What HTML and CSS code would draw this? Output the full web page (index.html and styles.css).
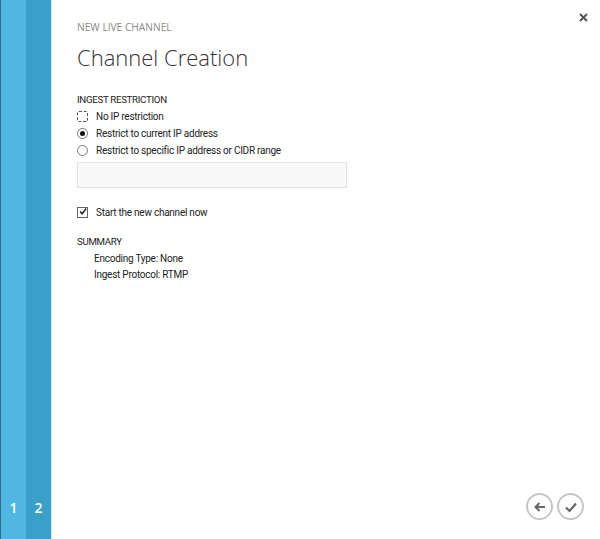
FILE: index.html
```html
<!DOCTYPE html>
<html>
<head>
<meta charset="utf-8">
<link rel="stylesheet" href="styles.css">
</head>
<body>
<div class="app">
  <nav class="steps">
    <div class="step step-one"><span>1</span></div>
    <div class="step step-two"><span>2</span></div>
  </nav>
  <main class="wizard">
    <header class="wizard-head">
      <div class="eyebrow">NEW LIVE CHANNEL</div>
      <button class="close" aria-label="Close">
        <svg width="9" height="9" viewBox="0 0 9 9"><path d="M1 1L8 8M8 1L1 8" stroke="#555" stroke-width="2"/></svg>
      </button>
    </header>
    <h1 class="title">Channel Creation</h1>

    <section class="group">
      <div class="label">INGEST RESTRICTION</div>
      <label class="option">
        <span class="radio focused"></span>
        <span>No IP restriction</span>
      </label>
      <label class="option">
        <span class="radio checked"></span>
        <span>Restrict to current IP address</span>
      </label>
      <label class="option">
        <span class="radio"></span>
        <span>Restrict to specific IP address or CIDR range</span>
      </label>
      <div class="textbox"></div>
    </section>

    <label class="option check-row">
      <span class="checkbox">
        <svg width="11" height="11" viewBox="0 0 11 11"><path d="M1.5 5.5L4.3 8.6L9.8 1.4" fill="none" stroke="#222" stroke-width="2"/></svg>
      </span>
      <span>Start the new channel now</span>
    </label>

    <section class="summary">
      <div class="label">SUMMARY</div>
      <div class="summary-item">Encoding Type: None</div>
      <div class="summary-item">Ingest Protocol: RTMP</div>
    </section>

    <footer class="wizard-foot">
      <button class="nav-btn" aria-label="Back">
        <svg width="14" height="14" viewBox="0 0 14 14"><path d="M12 7H3M6.5 3L2.5 7L6.5 11" fill="none" stroke="#666" stroke-width="2"/></svg>
      </button>
      <button class="nav-btn" aria-label="Finish">
        <svg width="14" height="14" viewBox="0 0 14 14"><path d="M2 7.5L5.5 11L12 3.5" fill="none" stroke="#666" stroke-width="2.2"/></svg>
      </button>
    </footer>
  </main>
</div>
</body>
</html>
```
FILE: styles.css
```css
* { box-sizing: border-box; }
html, body { margin: 0; padding: 0; }
body {
  width: 600px;
  height: 539px;
  overflow: hidden;
  font-family: "Roboto", "Open Sans", sans-serif;
  background: #fff;
  color: #333;
}
.app {
  display: flex;
  height: 539px;
}
.steps {
  display: flex;
  width: 52px;
  border-left: 1px solid #2a6e8c;
  border-right: 1px solid #c9ebf9;
}
.step {
  width: 25px;
  display: flex;
  flex-direction: column;
  justify-content: flex-end;
  align-items: center;
  padding-bottom: 22px;
  color: #fff;
  font-family: "Open Sans", sans-serif;
  font-size: 14px;
  font-weight: 600;
}
.step-one { background: #50b7e2; }
.step-two { background: #3aa0ca; }
.wizard {
  flex: 1;
  display: flex;
  flex-direction: column;
  padding: 0 12px 0 25px;
}
.wizard-head {
  display: flex;
  justify-content: space-between;
  align-items: flex-start;
}
.eyebrow {
  margin-top: 20px;
  font-family: "Open Sans", sans-serif;
  font-size: 10.2px;
  line-height: 14px;
  color: #8a8a8a;
}
.close {
  margin-top: 13px;
  border: 0;
  background: none;
  padding: 0;
  width: 9px;
  height: 9px;
  display: flex;
}
.title {
  margin: 8px 0 0;
  font-family: "Open Sans", sans-serif;
  font-size: 22px;
  font-weight: 300;
  color: #333;
  line-height: 30px;
}
.group {
  margin-top: 21px;
  display: flex;
  flex-direction: column;
}
.label {
  font-size: 9.7px;
  letter-spacing: -0.3px;
  color: #222;
  line-height: 14px;
  margin-bottom: 1px;
}
.option {
  display: flex;
  align-items: center;
  gap: 8px;
  height: 17px;
  font-size: 10px;
  letter-spacing: -0.25px;
  color: #222;
}
.radio {
  width: 11px;
  height: 11px;
  border: 1px solid #777;
  border-radius: 50%;
  position: relative;
}
.radio.focused {
  border: 1px dashed #555;
  border-radius: 2px;
}
.radio.checked::after {
  content: "";
  position: absolute;
  left: 2px;
  top: 2px;
  width: 5px;
  height: 5px;
  border-radius: 50%;
  background: #111;
}
.textbox {
  margin-top: 3px;
  width: 270px;
  height: 26px;
  background: #f9f9f9;
  border: 1px solid #e3e3e3;
}
.check-row {
  margin-top: 16px;
}
.checkbox {
  width: 11px;
  height: 11px;
  border: 1px solid #666;
  display: flex;
  align-items: center;
  justify-content: center;
}
.checkbox svg { margin-top: -2px; margin-left: 1px; }
.summary {
  margin-top: 14px;
}
.summary .label { margin-bottom: 2px; }
.summary-item {
  font-size: 10px;
  letter-spacing: -0.25px;
  color: #222;
  padding-left: 17px;
  line-height: 16px;
}
.wizard-foot {
  margin-top: auto;
  display: flex;
  justify-content: flex-end;
  gap: 4px;
  padding: 0 4px 19px 0;
}
.nav-btn {
  width: 27px;
  height: 27px;
  border: 2px solid #c6c6c6;
  border-radius: 50%;
  background: #fff;
  padding: 0;
  display: flex;
  align-items: center;
  justify-content: center;
}
```
